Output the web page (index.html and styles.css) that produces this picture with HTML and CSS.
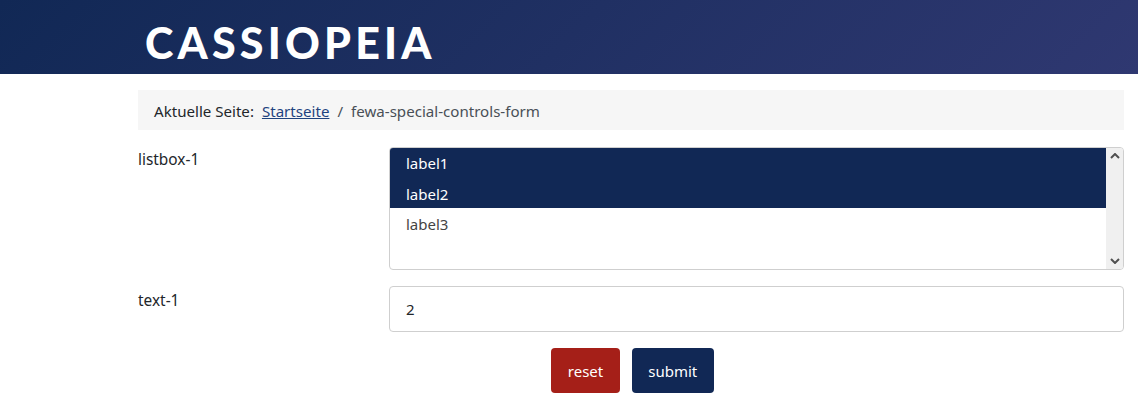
FILE: index.html
```html
<!DOCTYPE html>
<html lang="en">
<head>
    <meta charset="UTF-8">
    <meta name="viewport" content="width=device-width, initial-scale=1.0">
    <title>Cassiopeia</title>
    <link rel="stylesheet" href="styles.css">
</head>
<body>
    <header class="site-header">
        <div class="brand">CASSIOPEIA</div>
    </header>

    <main class="content">
        <nav class="breadcrumb">
            <span class="crumb-lead">Aktuelle Seite:</span>
            <a href="#" class="crumb-link">Startseite</a>
            <span class="crumb-sep">/</span>
            <span class="crumb-current">fewa-special-controls-form</span>
        </nav>

        <form class="form">
            <div class="form-row">
                <label class="form-label">listbox-1</label>
                <div class="listbox">
                    <div class="listbox-options">
                        <div class="option selected">label1</div>
                        <div class="option selected">label2</div>
                        <div class="option">label3</div>
                    </div>
                    <div class="scrollbar">
                        <svg width="10" height="6" viewBox="0 0 10 6"><path d="M1 5 L5 1 L9 5" fill="none" stroke="#505050" stroke-width="2"/></svg>
                        <svg width="10" height="6" viewBox="0 0 10 6"><path d="M1 1 L5 5 L9 1" fill="none" stroke="#505050" stroke-width="2"/></svg>
                    </div>
                </div>
            </div>

            <div class="form-row">
                <label class="form-label label-text">text-1</label>
                <input class="text-input" type="text" value="2">
            </div>

            <div class="form-actions">
                <button type="button" class="btn btn-reset">reset</button>
                <button type="button" class="btn btn-submit">submit</button>
            </div>
        </form>
    </main>
</body>
</html>
```

FILE: styles.css
```css
* {
    margin: 0;
    padding: 0;
    box-sizing: border-box;
}

body {
    font-family: "Noto Sans", "Open Sans", sans-serif;
    font-size: 16px;
    color: #22262a;
    background: white;
}

.site-header {
    height: 74px;
    padding: 17px 0 0 145px;
    background: linear-gradient(135deg, #112855 0%, #2f3871 100%);
}

.brand {
    font-family: Lato, sans-serif;
    font-size: 43px;
    font-weight: 900;
    line-height: 52px;
    letter-spacing: 4.2px;
    color: white;
}

.content {
    padding: 16px 14px 0 138px;
}

.breadcrumb {
    display: flex;
    align-items: center;
    height: 40px;
    padding: 2px 0 0 16px;
    margin-bottom: 17px;
    background: #f6f6f6;
    font-size: 15.1px;
}

.crumb-link {
    margin-left: 8px;
    color: #1f437f;
}

.crumb-sep {
    margin: 0 8px;
    color: #495057;
}

.crumb-current {
    color: #495057;
}

.form-row {
    display: grid;
    grid-template-columns: 251px 1fr;
    margin-bottom: 16px;
}

.form-label {
    font-size: 15.4px;
    line-height: 26px;
}

.label-text {
    padding-top: 2px;
}

.listbox {
    display: flex;
    height: 123px;
    border: 1px solid #cfcfcf;
    border-radius: 4px;
    overflow: hidden;
}

.listbox-options {
    flex: 1;
    margin-top: -1px;
    font-size: 15px;
}

.option {
    height: 30.5px;
    padding-left: 16px;
    line-height: 33px;
    color: #444;
}

.option.selected {
    background: #112855;
    color: white;
}

.scrollbar {
    display: flex;
    flex-direction: column;
    justify-content: space-between;
    align-items: center;
    width: 17px;
    padding: 5px 0;
    background: #f0f0f0;
}

.text-input {
    height: 46px;
    padding: 0 16px;
    border: 1px solid #cfcfcf;
    border-radius: 4px;
    font: inherit;
    font-size: 15px;
    color: #22262a;
}

.form-actions {
    display: flex;
    justify-content: center;
    gap: 12px;
    padding-left: 3px;
}

.btn {
    height: 45px;
    padding: 0 16.5px;
    border: none;
    border-radius: 4px;
    font: inherit;
    font-size: 15px;
    color: white;
}

.btn-reset {
    background: #a51f18;
}

.btn-submit {
    background: #112855;
}
```
